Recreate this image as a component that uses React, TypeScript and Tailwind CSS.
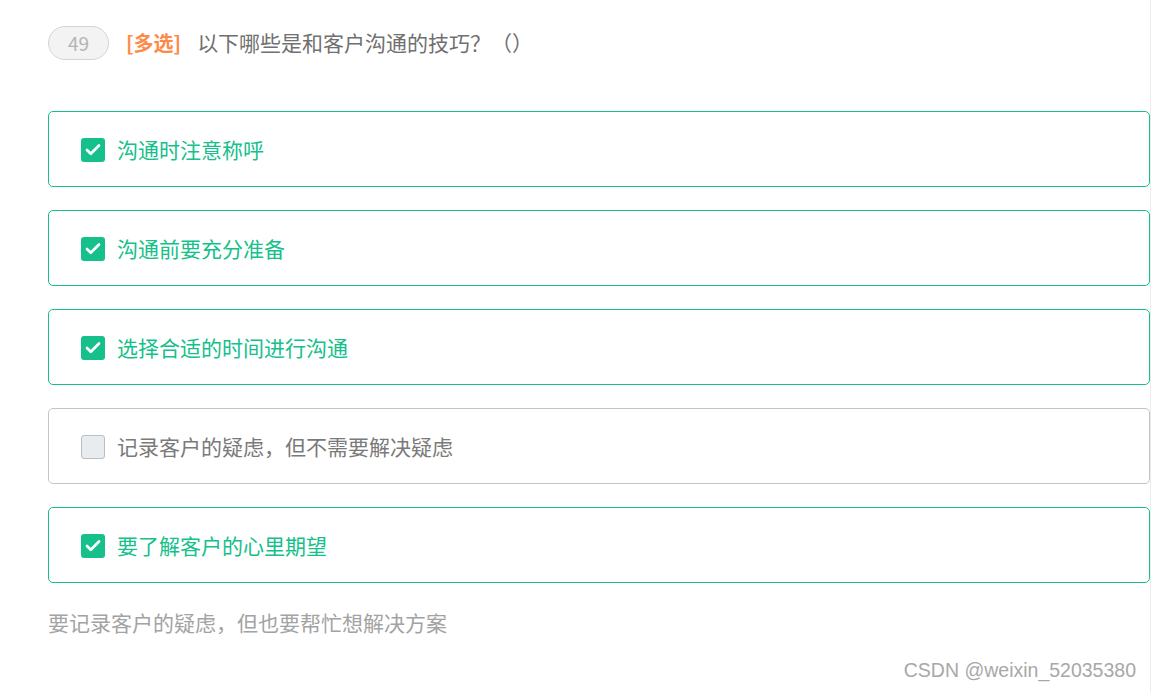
import { Check } from "lucide-react";

const CJK = "font-['Microsoft_YaHei','Noto_Sans_CJK_SC',sans-serif]";

const OPTIONS = [
  { label: "沟通时注意称呼", checked: true },
  { label: "沟通前要充分准备", checked: true },
  { label: "选择合适的时间进行沟通", checked: true },
  { label: "记录客户的疑虑，但不需要解决疑虑", checked: false },
  { label: "要了解客户的心里期望", checked: true },
];

function Option({ label, checked }: { label: string; checked: boolean }) {
  return (
    <div
      className={
        checked
          ? "flex h-[76px] items-center rounded-[5px] border border-[#15c08b] pl-[32px]"
          : "flex h-[76px] items-center rounded-[5px] border border-[#c4c4c4] pl-[32px]"
      }
    >
      {checked ? (
        <span className="mt-[2px] flex h-[24px] w-[24px] items-center justify-center rounded-[3px] bg-[#15c08b]">
          <Check size={18} strokeWidth={3.6} color="#ffffff" />
        </span>
      ) : (
        <span className="mt-[2px] h-[24px] w-[24px] rounded-[3px] border border-[#b9bec4] bg-[#e9ecef]" />
      )}
      <span
        className={
          checked
            ? "ml-[12px] text-[21px] leading-none text-[#15c08b]"
            : "ml-[12px] text-[21px] leading-none text-[#7a7a7a]"
        }
      >
        {label}
      </span>
    </div>
  );
}

export default function App() {
  return (
    <div className={`h-[692px] w-[1151px] bg-white ${CJK}`}>
      <div className="flex h-full w-[1151px] flex-col border-r border-[#ececec] pl-[48px]">
        <div className="mt-[26px] flex items-center">
          <span className="flex h-[34px] w-[61px] items-center justify-center rounded-full border border-[#d4d4d4] bg-[#f3f3f3] text-[19px] text-[#b4b4b4]">
            49
          </span>
          <span className="ml-[17px] text-[20px] font-bold text-[#ff8a47]">[多选]</span>
          <span className="ml-[16px] text-[21px] text-[#707070]">以下哪些是和客户沟通的技巧？（）</span>
        </div>

        <div className="mt-[51px] flex flex-col gap-[23px]">
          {OPTIONS.map((o) => (
            <Option key={o.label} label={o.label} checked={o.checked} />
          ))}
        </div>

        <p className="mt-[24px] text-[21px] leading-[30px] text-[#a3a3a3]">
          要记录客户的疑虑，但也要帮忙想解决方案
        </p>

        <div className="mt-[19px] flex justify-end pr-[14px]">
          <span className="font-['Liberation_Sans',Arial,sans-serif] text-[19.5px] text-[#a8a8a8]">
            CSDN @weixin_52035380
          </span>
        </div>
      </div>
    </div>
  );
}
